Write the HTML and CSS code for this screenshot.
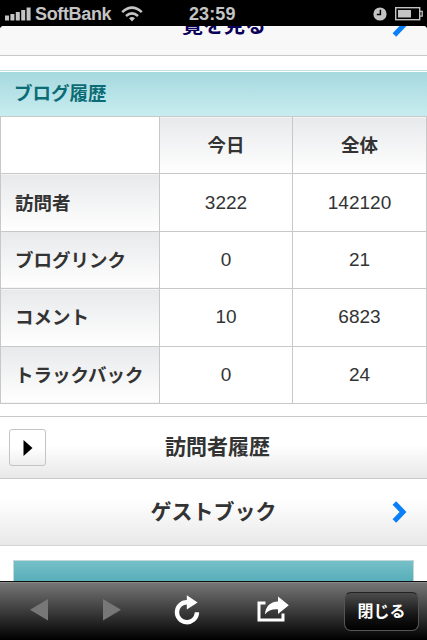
FILE: index.html
```html
<!DOCTYPE html>
<html lang="ja">
<head>
    <meta charset="UTF-8">
    <meta name="viewport" content="width=device-width, initial-scale=1.0">
    <title>ブログ履歴</title>
    <link rel="stylesheet" href="styles.css">
</head>
<body>
    <header class="status-bar">
        <svg class="signal" width="26" height="14" viewBox="0 0 26 14" fill="#c4c4c4">
            <rect x="0" y="8.5" width="4" height="5"/>
            <rect x="5.4" y="7" width="4" height="6.5"/>
            <rect x="10.8" y="5" width="4" height="8.5"/>
            <rect x="16.2" y="3" width="4" height="10.5"/>
            <rect x="21.6" y="0.5" width="4" height="13"/>
        </svg>
        <span class="carrier">SoftBank</span>
        <svg class="wifi" width="22" height="16" viewBox="0 0 22 16" fill="none" stroke="#c4c4c4" stroke-width="2.6">
            <path d="M1.2 6.1Q11-2.8 20.8 6.1"/>
            <path d="M5 10Q11 4.6 17 10"/>
            <path d="M11 15.4l-3-3.2q3-2.4 6 0z" fill="#c4c4c4" stroke="none"/>
        </svg>
        <span class="time">23:59</span>
        <svg class="alarm" width="14" height="14" viewBox="0 0 14 14">
            <circle cx="7" cy="7" r="6.6" fill="#c4c4c4"/>
            <path d="M7.4 2.8V7.4H3.8" fill="none" stroke="#000" stroke-width="1.5"/>
        </svg>
        <svg class="battery" width="28" height="14" viewBox="0 0 28 14">
            <rect x="0.7" y="0.7" width="24" height="12" fill="none" stroke="#c4c4c4" stroke-width="1.4"/>
            <rect x="3" y="3" width="13" height="7.5" fill="#c4c4c4"/>
            <path d="M25 4.3h2.2v4.8H25" fill="none" stroke="#c4c4c4" stroke-width="1.3"/>
        </svg>
    </header>

    <main class="page">
        <a class="more-link" href="#">
            <span>覧を見る</span>
            <svg class="chevron" width="15" height="22" viewBox="0 0 15 22">
                <path d="M2.4 2L11 11L2.4 20" fill="none" stroke="#0a80f8" stroke-width="5"/>
            </svg>
        </a>

        <section class="history">
            <h2>ブログ履歴</h2>
            <table>
                <tr>
                    <td></td>
                    <th>今日</th>
                    <th>全体</th>
                </tr>
                <tr>
                    <th>訪問者</th>
                    <td>3222</td>
                    <td>142120</td>
                </tr>
                <tr>
                    <th>ブログリンク</th>
                    <td>0</td>
                    <td>21</td>
                </tr>
                <tr>
                    <th>コメント</th>
                    <td>10</td>
                    <td>6823</td>
                </tr>
                <tr>
                    <th>トラックバック</th>
                    <td>0</td>
                    <td>24</td>
                </tr>
            </table>
        </section>

        <div class="menu-row visitors">
            <button class="expand" type="button">
                <svg width="10" height="16" viewBox="0 0 10 16"><path d="M0.5 0L9.5 8L0.5 16z" fill="#000"/></svg>
            </button>
            <span>訪問者履歴</span>
        </div>
        <a class="menu-row guestbook" href="#">
            <span>ゲストブック</span>
            <svg class="chevron" width="15" height="22" viewBox="0 0 15 22">
                <path d="M2.4 2L11 11L2.4 20" fill="none" stroke="#0a80f8" stroke-width="5"/>
            </svg>
        </a>

        <div class="banner"></div>
    </main>

    <footer class="toolbar">
        <svg class="back" width="18" height="22" viewBox="0 0 18 22"><path d="M18 0V21.5L0 10.7z" fill="#777"/></svg>
        <svg class="forward" width="18" height="22" viewBox="0 0 18 22"><path d="M0 0V21.5L18 10.7z" fill="#777"/></svg>
        <svg class="reload" width="26" height="30" viewBox="0 0 26 30">
            <path d="M14 7.2H13A10 10 0 1 0 22.9 18.3V17.2" fill="none" stroke="#fff" stroke-width="4.4"/>
            <path d="M12.8 0.2L23.6 7.4L12.8 14.6z" fill="#fff"/>
        </svg>
        <svg class="share" width="32" height="26" viewBox="0 0 32 26">
            <path d="M8.5 7H2V24H26V17.5" fill="none" stroke="#fff" stroke-width="3"/>
            <path d="M21 0.4L31.8 9.3L21 18V13.4C15 13 11 14.7 8 18.4C8.6 10.5 13 6 21 5.6z" fill="#fff"/>
        </svg>
        <button class="close" type="button">閉じる</button>
    </footer>
</body>
</html>
```
FILE: styles.css
```css
* {
    box-sizing: border-box;
}
body {
    margin: 0;
    height: 640px;
    display: flex;
    flex-direction: column;
    overflow: hidden;
    background-color: #000;
    color: #333;
    font-family: "Liberation Sans", "Noto Sans CJK JP", sans-serif;
}
svg {
    display: block;
    flex: none;
}
a {
    color: inherit;
    text-decoration: none;
}
button {
    font-family: inherit;
    padding: 0;
}
.status-bar {
    flex: none;
    height: 26px;
    padding: 1px 4px 0 5px;
    display: flex;
    align-items: center;
    color: #c4c4c4;
    font-size: 18px;
    line-height: 20px;
    font-weight: bold;
}
.carrier {
    width: 76px;
    margin-left: 4px;
    letter-spacing: -0.35px;
}
.wifi {
    margin-left: 10px;
}
.time {
    width: 48px;
    margin-left: 46px;
    letter-spacing: 0.1px;
}
.alarm {
    margin-left: auto;
}
.battery {
    margin-left: 8px;
}
.page {
    flex: none;
    height: 555px;
    background-color: #fff;
    border-radius: 4px 4px 0 0;
    overflow: hidden;
}
.more-link {
    height: 30px;
    display: flex;
    justify-content: center;
    align-items: flex-end;
    overflow: hidden;
    background-color: #f8f8f8;
    border-bottom: 1px solid #c8c8c8;
    color: #0b0058;
    font-size: 21px;
    font-weight: bold;
    position: relative;
}
.more-link span {
    line-height: 24px;
    margin-bottom: 18px;
    margin-left: 21px;
}
.chevron {
    position: absolute;
    right: 20px;
}
.more-link .chevron {
    bottom: 18px;
}
.history {
    margin-top: 14px;
    border-top: 1px solid #c5e0e4;
}
.history h2 {
    height: 45px;
    margin: 1px 0 0;
    padding-left: 14px;
    background: linear-gradient(#a6d9de, #c8edf0);
    color: #0c6c76;
    font-size: 18.5px;
    line-height: 43px;
}
table {
    width: 427px;
    height: 288px;
    margin-top: -1px;
    table-layout: fixed;
    border-collapse: collapse;
    font-size: 19px;
}
th, td {
    height: 57.3px;
    padding: 0;
    border: 1px solid #c8c8c8;
    text-align: center;
}
td {
    background-color: #fff;
}
th {
    padding-bottom: 2px;
    background: linear-gradient(#e8e9eb, #fff);
    font-size: 18.5px;
}
th:first-child, td:first-child {
    width: 159px;
}
th:nth-child(2) {
    width: 133px;
}
th:first-child {
    padding-left: 14px;
    text-align: left;
    white-space: nowrap;
}
.menu-row {
    position: relative;
    display: flex;
    align-items: center;
    justify-content: center;
    font-size: 21px;
    font-weight: bold;
}
.menu-row span {
    padding-bottom: 4px;
}
.visitors {
    height: 63px;
    margin-top: 12px;
    padding-left: 9px;
    border-top: 1px solid #c8c8c8;
    border-bottom: 1px solid #c8c8c8;
    background: linear-gradient(#fff 45%, #e8e8e8);
}
.expand {
    width: 37px;
    height: 37px;
    margin-right: auto;
    display: flex;
    align-items: center;
    justify-content: center;
    border: 1px solid #c4c4c4;
    border-radius: 3px;
    background: linear-gradient(#fff 50%, #eee);
}
.visitors span {
    margin-right: auto;
    padding-right: 38px;
    padding-bottom: 5px;
}
.guestbook {
    height: 67px;
    border-bottom: 1px solid #d4d4d4;
    background: linear-gradient(#fff 30%, #e8e8e8);
}
.banner {
    height: 30px;
    margin: 14px 13px 0;
    border: 1px solid #c4d8da;
    background: linear-gradient(#76c0c8, #4ba7b3);
}
.toolbar {
    flex: none;
    height: 59px;
    padding: 0 8px 0 30px;
    display: flex;
    align-items: center;
    border-top: 1px solid #111;
    box-shadow: inset 0 1px #888;
    background: linear-gradient(#777, #3c3c3c 50%, #000);
}
.back, .forward {
    margin-top: -2px;
}
.forward {
    margin-left: 55px;
}
.reload {
    margin-left: 53px;
    margin-top: -2px;
}
.share {
    margin-left: 57px;
    margin-top: -4px;
}
.close {
    width: 75px;
    height: 39px;
    margin-left: auto;
    border: 1px solid #555;
    border-top-color: #222;
    border-radius: 7px;
    padding-bottom: 3px;
    background: linear-gradient(#4c4c4c, #151515 60%, #000);
    color: #fff;
    font-size: 16px;
    font-weight: bold;
}
```
